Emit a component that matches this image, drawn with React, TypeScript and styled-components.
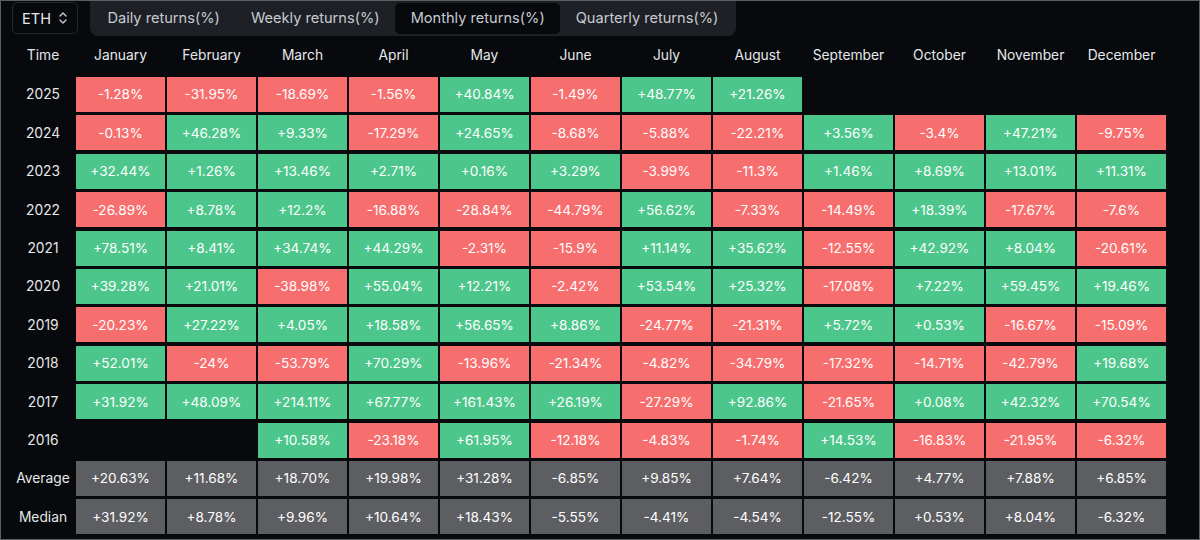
import React from 'react'
import styled, { createGlobalStyle } from 'styled-components'

const GlobalStyle = createGlobalStyle`
  html, body {
    margin: 0;
    padding: 0;
    background: #07090d;
  }
  body {
    font-family: Inter, "Noto Sans", "Liberation Sans", sans-serif;
  }
`

type Cell = number | null

const months = ['January', 'February', 'March', 'April', 'May', 'June', 'July', 'August', 'September', 'October', 'November', 'December']

const years: [string, Cell[]][] = [
  ['2025', [-1.28, -31.95, -18.69, -1.56, 40.84, -1.49, 48.77, 21.26, null, null, null, null]],
  ['2024', [-0.13, 46.28, 9.33, -17.29, 24.65, -8.68, -5.88, -22.21, 3.56, -3.4, 47.21, -9.75]],
  ['2023', [32.44, 1.26, 13.46, 2.71, 0.16, 3.29, -3.99, -11.3, 1.46, 8.69, 13.01, 11.31]],
  ['2022', [-26.89, 8.78, 12.2, -16.88, -28.84, -44.79, 56.62, -7.33, -14.49, 18.39, -17.67, -7.6]],
  ['2021', [78.51, 8.41, 34.74, 44.29, -2.31, -15.9, 11.14, 35.62, -12.55, 42.92, 8.04, -20.61]],
  ['2020', [39.28, 21.01, -38.98, 55.04, 12.21, -2.42, 53.54, 25.32, -17.08, 7.22, 59.45, 19.46]],
  ['2019', [-20.23, 27.22, 4.05, 18.58, 56.65, 8.86, -24.77, -21.31, 5.72, 0.53, -16.67, -15.09]],
  ['2018', [52.01, -24, -53.79, 70.29, -13.96, -21.34, -4.82, -34.79, -17.32, -14.71, -42.79, 19.68]],
  ['2017', [31.92, 48.09, 214.11, 67.77, 161.43, 26.19, -27.29, 92.86, -21.65, 0.08, 42.32, 70.54]],
  ['2016', [null, null, 10.58, -23.18, 61.95, -12.18, -4.83, -1.74, 14.53, -16.83, -21.95, -6.32]],
]

const stats: [string, string[]][] = [
  ['Average', ['+20.63%', '+11.68%', '+18.70%', '+19.98%', '+31.28%', '-6.85%', '+9.85%', '+7.64%', '-6.42%', '+4.77%', '+7.88%', '+6.85%']],
  ['Median', ['+31.92%', '+8.78%', '+9.96%', '+10.64%', '+18.43%', '-5.55%', '-4.41%', '-4.54%', '-12.55%', '+0.53%', '+8.04%', '-6.32%']],
]

const fmt = (v: number) => (v >= 0 ? '+' : '') + String(v) + '%'

const tabs = ['Daily returns(%)', 'Weekly returns(%)', 'Monthly returns(%)', 'Quarterly returns(%)']

const App = () => {
  return (
    <Frame>
      <GlobalStyle />
      <TopBar>
        <Select>
          ETH
          <svg width="10" height="16" viewBox="0 0 10 16" fill="none">
            <path d="M2 6L5 3L8 6" stroke="#c9ccd1" strokeWidth="1.4" strokeLinecap="round" strokeLinejoin="round" />
            <path d="M2 10L5 13L8 10" stroke="#c9ccd1" strokeWidth="1.4" strokeLinecap="round" strokeLinejoin="round" />
          </svg>
        </Select>
        <Tabs>
          {tabs.map((t) => (
            <Tab key={t} active={t.startsWith('Monthly')}>{t}</Tab>
          ))}
        </Tabs>
      </TopBar>
      <Grid>
        <Label>Time</Label>
        {months.map((m) => <Label key={m}>{m}</Label>)}
        {years.map(([y, vals]) => (
          <React.Fragment key={y}>
            <Label>{y}</Label>
            {vals.map((v, i) =>
              v === null ? <Empty key={i} /> : <Box key={i} tone={v >= 0 ? 'up' : 'down'}>{fmt(v)}</Box>
            )}
          </React.Fragment>
        ))}
        {stats.map(([name, vals]) => (
          <React.Fragment key={name}>
            <Label>{name}</Label>
            {vals.map((v, i) => <Box key={i} tone="stat">{v}</Box>)}
          </React.Fragment>
        ))}
      </Grid>
    </Frame>
  )
}

export default App

const Frame = styled.div`
  width: 1200px;
  height: 540px;
  box-sizing: border-box;
  border: 1px solid #5d5f63;
  background: #07090d;
  overflow: hidden;
  padding: 0 0 0 11px;
`

const TopBar = styled.div`
  display: flex;
  align-items: flex-start;
  gap: 12px;
  height: 35px;
`

const Select = styled.div`
  margin-top: 1px;
  width: 66px;
  height: 32px;
  box-sizing: border-box;
  border: 1px solid #25282e;
  border-radius: 5px;
  display: flex;
  align-items: center;
  justify-content: center;
  gap: 7px;
  color: #e6e8ea;
  font-size: 14.5px;
`

const Tabs = styled.div`
  display: flex;
  align-items: center;
  height: 36px;
  margin-top: -1px;
  padding: 0 2px;
  background: #1e2026;
  border-radius: 0 0 8px 8px;
  box-sizing: border-box;
`

const Tab = styled.div<{ active?: boolean }>`
  height: 31px;
  display: flex;
  align-items: center;
  padding: 0 15.5px;
  border-radius: 5px;
  font-size: 14.6px;
  color: #c7cbd1;
  background: ${({ active }) => (active ? '#07090d' : 'transparent')};
`

const Grid = styled.div`
  display: grid;
  grid-template-columns: 62px repeat(12, 89px);
  grid-template-rows: 37.6px repeat(12, 35px);
  column-gap: 2px;
  row-gap: 3.4px;
`

const Label = styled.div`
  display: flex;
  align-items: center;
  justify-content: center;
  color: #e6e8ea;
  font-size: 13.8px;
  white-space: nowrap;
`

const toneColor = { up: '#4cc68a', down: '#f76e6e', stat: '#5d5e61' }

const Box = styled.div<{ tone: 'up' | 'down' | 'stat' }>`
  display: flex;
  align-items: center;
  justify-content: center;
  background: ${({ tone }) => toneColor[tone]};
  color: #ffffff;
  font-size: 13.6px;
`

const Empty = styled.div``
